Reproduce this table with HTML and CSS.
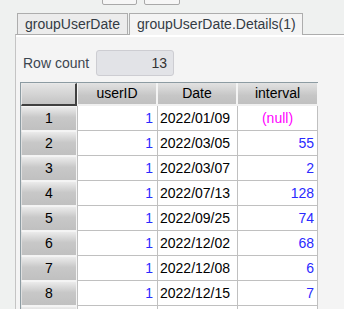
FILE: index.html
```html
<!DOCTYPE html>
<html lang="en">
<head>
    <meta charset="UTF-8">
    <title>groupUserDate.Details(1)</title>
    <link rel="stylesheet" href="styles.css">
</head>
<body>

    <div class="toolbar">
        <button class="tool-btn first"></button>
        <button class="tool-btn second"></button>
    </div>

    <div class="tabs">
        <div class="tab">groupUserDate</div>
        <div class="tab active">groupUserDate.Details(1)</div>
    </div>

    <div class="panel">
        <div class="row-count">
            <span class="row-count-label">Row count</span>
            <span class="row-count-value">13</span>
        </div>

        <!-- result grid -->
        <div class="grid">
            <div class="corner"></div>
            <div class="col-head">userID</div>
            <div class="col-head">Date</div>
            <div class="col-head">interval</div>

            <div class="row-head">1</div><div class="cell num">1</div><div class="cell date">2022/01/09</div><div class="cell null">(null)</div>
            <div class="row-head">2</div><div class="cell num">1</div><div class="cell date">2022/03/05</div><div class="cell num">55</div>
            <div class="row-head">3</div><div class="cell num">1</div><div class="cell date">2022/03/07</div><div class="cell num">2</div>
            <div class="row-head">4</div><div class="cell num">1</div><div class="cell date">2022/07/13</div><div class="cell num">128</div>
            <div class="row-head">5</div><div class="cell num">1</div><div class="cell date">2022/09/25</div><div class="cell num">74</div>
            <div class="row-head">6</div><div class="cell num">1</div><div class="cell date">2022/12/02</div><div class="cell num">68</div>
            <div class="row-head">7</div><div class="cell num">1</div><div class="cell date">2022/12/08</div><div class="cell num">6</div>
            <div class="row-head">8</div><div class="cell num">1</div><div class="cell date">2022/12/15</div><div class="cell num">7</div>
            <!-- next row only peeks in at the bottom edge -->
            <div class="row-head"></div><div class="cell num"></div><div class="cell date"></div><div class="cell num"></div>
        </div>
    </div>

</body>
</html>
```

FILE: styles.css
```css
/* Base */
body {
    margin: 0;
    width: 344px;
    height: 309px;
    overflow: hidden;
    background-color: #eff1f0;
    font-family: 'Liberation Sans', Arial, sans-serif;
    font-size: 14px;
    color: #000;
}

/* Toolbar, only the bottom edge of the buttons is visible */
.toolbar {
    height: 5px;
    overflow: hidden;
    display: flex;
    align-items: flex-end;
    padding-left: 102px;
    gap: 7px;
}

.tool-btn {
    height: 20px;
    border: 1px solid #a9a9a9;
    border-radius: 2px;
    background-color: #f6f6f6;
    padding: 0;
}

.tool-btn.first {
    width: 35px;
}

.tool-btn.second {
    width: 36px;
}

/* Tabs */
.tabs {
    display: flex;
    margin-top: 8px;
    padding-left: 17px;
    gap: 1px;
    height: 21px;
}

.tab {
    border: 1px solid #adadad;
    border-bottom: none;
    background-color: #ececec;
    color: #333b44;
    padding: 0 7px;
    line-height: 20px;
    height: 20px;
}

.tab.active {
    background-color: #f4f4f4;
    height: 21px;
    width: 158px;
    position: relative;
    z-index: 1;
}

/* Panel */
.panel {
    margin-left: 15px;
    height: 300px;
    border-top: 1px solid #adadad;
    border-left: 1px solid #c4c4c4;
    background-color: #f4f4f4;
    box-shadow: inset 0 2px 0 #ffffff;
    padding-left: 4px;
    padding-top: 15px;
}

.row-count {
    display: flex;
    align-items: center;
    gap: 7px;
    padding-left: 3px;
}

.row-count-label {
    color: #3c4650;
}

.row-count-value {
    width: 70px;
    height: 24px;
    line-height: 24px;
    padding-right: 6px;
    text-align: right;
    background-color: #e2e3e7;
    border: 1px solid #cdcdd2;
    border-radius: 3px;
    color: #333;
}

/* Result grid */
.grid {
    margin-top: 6px;
    display: grid;
    grid-template-columns: 56px 80px 80px 81px;
    grid-auto-rows: 25px;
    grid-template-rows: 23px;
    width: 297px;
    border-top: 1px solid #8c9ba2;
    border-left: 1px solid #8c9ba2;
    background-color: #ffffff;
}

.corner {
    background: linear-gradient(#e4e4e4, #c4c4c4);
    border-right: 2px solid #404040;
    border-bottom: 2px solid #404040;
    border-left: 1px solid #e8e8e8;
    border-top: 1px solid #e8e8e8;
}

.col-head {
    background: linear-gradient(#e2e2e2 0%, #c6c6c6 60%, #c0c0c0 100%);
    border-left: 1px solid #f4f4f4;
    border-right: 1px solid #f4f4f4;
    border-bottom: 2px solid #f0f0f0;
    text-align: center;
    line-height: 21px;
}

.row-head {
    background: linear-gradient(#ebebeb 0%, #c8c8c8 45%, #c0c0c0 100%);
    border-top: 1px solid #f4f4f4;
    border-bottom: 1px solid #f4f4f4;
    border-left: 1px solid #e0e0e0;
    border-right: 1px solid #f4f4f4;
    text-align: center;
    line-height: 23px;
}

.cell {
    border-left: 1px solid #c0c0c0;
    border-bottom: 1px solid #c0c0c0;
    line-height: 24px;
    white-space: nowrap;
}

.cell.num {
    text-align: right;
    padding-right: 4px;
    color: #2a2aff;
}

.cell.date {
    padding-left: 2px;
}

.cell.null {
    text-align: center;
    color: #ff00ff;
    border-right: 1px solid #c0c0c0;
}

.cell.num:nth-child(4n+4) {
    border-right: 1px solid #c0c0c0;
    padding-right: 3px;
}
```
